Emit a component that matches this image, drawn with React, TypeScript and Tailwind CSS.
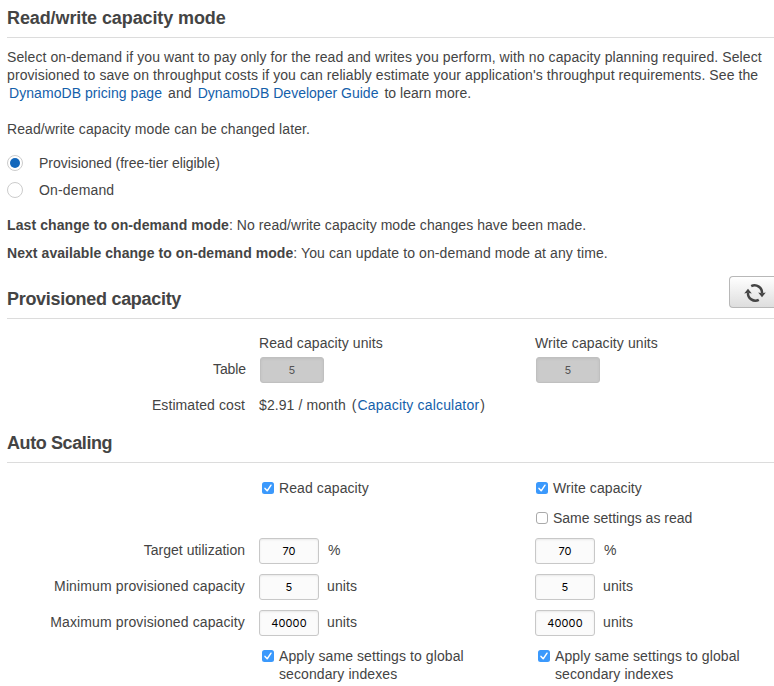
import type { ReactNode } from "react";

function Heading({ children, className = "" }: { children: ReactNode; className?: string }) {
  return (
    <h2 className={`flex border-b border-[#dcdcdc] text-[18px] leading-[22px] font-bold text-[#444] ${className}`}>
      {children}
    </h2>
  );
}

function Link({ children, className = "" }: { children: ReactNode; className?: string }) {
  return (
    <a href="#" className={`text-[#1460aa] ${className}`}>
      {children}
    </a>
  );
}

function Radio({ label, checked = false, className = "" }: { label: string; checked?: boolean; className?: string }) {
  return (
    <label className="flex h-[27px] items-center">
      <span className="mr-4 flex size-4 items-center justify-center rounded-full border border-[#ccc] bg-white">
        {checked && <span className="size-[10px] rounded-full bg-[#1166bb]" />}
      </span>
      <span className={className}>{label}</span>
    </label>
  );
}

function Check({ checked = true }: { checked?: boolean }) {
  return checked ? (
    <svg className="mt-[3px] size-3 shrink-0" viewBox="0 0 12 12">
      <rect width="12" height="12" rx="2.5" fill="#3b99fc" />
      <path d="M3 6.4 5.2 8.8 9 3.2" fill="none" stroke="#fff" strokeWidth="1.5" strokeLinecap="round" strokeLinejoin="round" />
    </svg>
  ) : (
    <span className="mt-[3px] size-3 shrink-0 rounded-[3px] border border-[#aaa] bg-white" />
  );
}

function Field({ value, unit }: { value: string; unit: string }) {
  return (
    <div className="flex h-[26px] w-[276px] shrink-0 items-center">
      <input
        readOnly
        value={value}
        className="mr-[8px] h-[26px] w-[60px] rounded-[3px] border border-[#c8c8c8] bg-[#fbfbfb] text-center font-['Inter','Liberation_Sans',sans-serif] text-[11px] tracking-[0.1px] text-black shadow-[inset_0_1px_2px_rgba(0,0,0,0.08)]"
      />
      <span className={unit === "%" ? "relative -top-px pl-px" : "relative -top-px"}>{unit}</span>
    </div>
  );
}

function DisabledField({ value }: { value: string }) {
  return (
    <div className="w-[276px] shrink-0 pl-px">
      <input
        disabled
        value={value}
        className="block h-[26px] w-16 rounded-[3px] border border-[#c0c0c0] bg-[#cbcbcb] text-center font-['Inter','Liberation_Sans',sans-serif] text-[11px] text-[#555] shadow-[inset_0_1px_3px_rgba(0,0,0,0.06)]"
      />
    </div>
  );
}

function ScalingRow({ label, value, unit, className = "" }: { label: string; value: string; unit: string; className?: string }) {
  return (
    <div className="mb-[10px] flex h-[26px] items-center">
      <span className={`relative -top-px mr-[14px] w-[238px] shrink-0 text-right ${className}`}>{label}</span>
      <Field value={value} unit={unit} />
      <Field value={value} unit={unit} />
    </div>
  );
}

function ApplyGlobal() {
  return (
    <label className="flex w-[276px] shrink-0 gap-[5px] pl-[3px]">
      <Check />
      <span>
        Apply same settings to global
        <br />
        secondary indexes
      </span>
    </label>
  );
}

function Refresh() {
  return (
    <svg className="relative top-px size-[22px]" viewBox="0 0 22 22" fill="none">
      <path d="M7.2 4.2A7.4 7.4 0 0 1 18 11.4" stroke="#444" strokeWidth="2.5" />
      <path d="M14.8 17.8A7.4 7.4 0 0 1 4 10.6" stroke="#444" strokeWidth="2.5" />
      <path d="M14.2 10.6 18 11.2 21.8 10.6 18 15.2Z" fill="#444" />
      <path d="M0.2 11.4 4 10.8 7.8 11.4 4 6.8Z" fill="#444" />
    </svg>
  );
}

export default function App() {
  return (
    <main className="h-[686px] w-[774px] overflow-hidden bg-white pl-[7px] font-['Liberation_Sans',Arial,sans-serif] text-[14px] leading-[18px] tracking-[0.09px] whitespace-nowrap text-[#444]">
      <Heading className="h-[38px] pt-[7px] tracking-[-0.1px]">Read/write capacity mode</Heading>

      <p className="mt-[10px]">
        <span className="block">
          Select on-demand if you want to pay only for the read and writes you perform, with no capacity planning required. Select
        </span>
        <span className="block">
          provisioned to save on throughput costs if you can reliably estimate your application's throughput requirements. See the
        </span>
        <span className="block">
          <Link className="ml-[2px] tracking-[0.06px]">DynamoDB pricing page</Link>
          <span className="mx-[6px]">and</span>
          <Link className="tracking-[0.01px]">DynamoDB Developer Guide</Link>
          <span className="ml-[6px] tracking-[0.03px]">to learn more.</span>
        </span>
      </p>
      <p className="mt-[18px]">Read/write capacity mode can be changed later.</p>

      <div className="mt-[11px]">
        <Radio label="Provisioned (free-tier eligible)" checked className="tracking-[-0.04px]" />
        <Radio label="On-demand" className="tracking-[0.15px]" />
      </div>

      <p className="mt-[13px]">
        <b>Last change to on-demand mode</b>
        <span className="tracking-[0.06px]">: No read/write capacity mode changes have been made.</span>
      </p>
      <p className="mt-[10px]">
        <b className="tracking-[0.06px]">Next available change to on-demand mode</b>
        <span className="tracking-[0.1px]">: You can update to on-demand mode at any time.</span>
      </p>

      <Heading className="mt-[14px] h-[43px] justify-between tracking-[-0.3px]">
        <span className="mt-[12px]">Provisioned capacity</span>
        <button className="flex h-8 w-[45px] items-center rounded-l-[4px] border border-r-0 border-[#b8b8b8] bg-linear-to-b from-white to-[#dedede] pl-[14px]">
          <Refresh />
        </button>
      </Heading>

      <div className="mt-[15px] flex pl-[252px]">
        <span className="w-[276px]">Read capacity units</span>
        <span>Write capacity units</span>
      </div>
      <div className="mt-[5px] flex h-[26px] items-center">
        <span className="relative -top-px mr-[13px] w-[239px] shrink-0 text-right tracking-[-0.1px]">Table</span>
        <DisabledField value="5" />
        <DisabledField value="5" />
      </div>
      <div className="mt-[13px] flex">
        <span className="mr-[14px] w-[238px] text-right">Estimated cost</span>
        <span>
          $2.91 / month <span className="ml-[2px]">(</span>
          <Link className="mx-px tracking-[0.18px]">Capacity calculator</Link>)
        </span>
      </div>

      <Heading className="mt-[17px] h-[32px] pt-px tracking-[-0.4px]">Auto Scaling</Heading>

      <div className="mt-[16px] flex pl-[255px]">
        <label className="flex w-[274px] gap-[5px]">
          <Check />
          Read capacity
        </label>
        <label className="flex gap-[5px]">
          <Check />
          Write capacity
        </label>
      </div>
      <div className="mt-[12px] mb-[11px] flex pl-[529px]">
        <label className="flex gap-[5px] tracking-normal">
          <Check checked={false} />
          Same settings as read
        </label>
      </div>
      <ScalingRow label="Target utilization" value="70" unit="%" className="tracking-normal" />
      <ScalingRow label="Minimum provisioned capacity" value="5" unit="units" className="tracking-[0.12px]" />
      <ScalingRow label="Maximum provisioned capacity" value="40000" unit="units" className="tracking-[0.12px]" />
      <div className="mt-[11px] flex pl-[252px]">
        <ApplyGlobal />
        <ApplyGlobal />
      </div>
    </main>
  );
}
